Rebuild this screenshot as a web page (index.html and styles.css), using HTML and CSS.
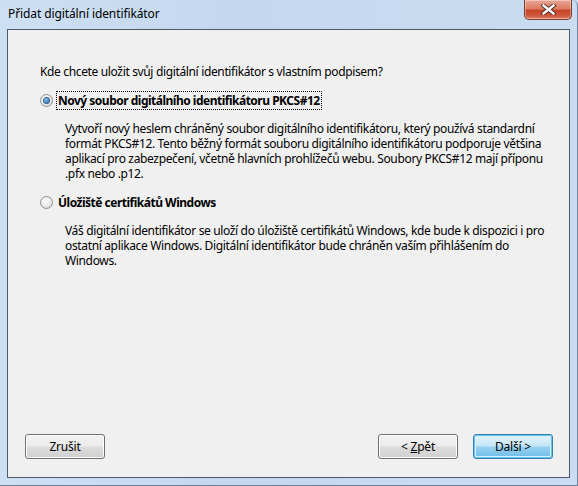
FILE: index.html
```html
<!DOCTYPE html>
<html lang="cs">
<head>
<meta charset="utf-8">
<title>Přidat digitální identifikátor</title>
<link rel="stylesheet" href="styles.css">
</head>
<body>
<div class="window">
  <div class="titlebar">
    <span class="title">Přidat digitální identifikátor</span>
    <button class="close" aria-label="Zavřít">
      <svg width="15" height="11" viewBox="0 0 15 11">
        <path d="M2.5 1.5 L12.5 9.5 M12.5 1.5 L2.5 9.5" stroke="#4a2a25" stroke-width="4.2" stroke-linecap="square" fill="none"/>
        <path d="M2.5 1.5 L12.5 9.5 M12.5 1.5 L2.5 9.5" stroke="#ffffff" stroke-width="2.4" stroke-linecap="square" fill="none"/>
      </svg>
    </button>
  </div>
  <div class="client">
    <p class="question">Kde chcete uložit svůj digitální identifikátor s vlastním podpisem?</p>
    <div class="option option-first">
      <span class="radio checked"></span>
      <span class="label focus">Nový soubor digitálního identifikátoru PKCS#12</span>
    </div>
    <p class="desc">Vytvoří nový heslem chráněný soubor digitálního identifikátoru, který používá standardní formát PKCS#12. Tento běžný formát souboru digitálního identifikátoru podporuje většina aplikací pro zabezpečení, včetně hlavních prohlížečů webu. Soubory PKCS#12 mají příponu .pfx nebo .p12.</p>
    <div class="option option-second">
      <span class="radio"></span>
      <span class="label">Úložiště certifikátů Windows</span>
    </div>
    <p class="desc desc-second">Váš digitální identifikátor se uloží do úložiště certifikátů Windows, kde bude k dispozici i pro ostatní aplikace Windows. Digitální identifikátor bude chráněn vaším přihlášením do Windows.</p>
    <div class="buttons">
      <button class="btn">Zrušit</button>
      <div class="nav">
        <button class="btn">&lt; <u>Z</u>pět</button>
        <button class="btn default">Další &gt;</button>
      </div>
    </div>
  </div>
</div>
</body>
</html>
```
FILE: styles.css
```css
html, body {
  margin: 0;
  padding: 0;
  background: #c9dcf1;
}
body {
  font-family: "Noto Sans", "Open Sans", sans-serif;
  font-size: 12px;
  color: #000;
}
.window {
  width: 578px;
  height: 486px;
  box-sizing: border-box;
  display: flex;
  flex-direction: column;
  background: linear-gradient(90deg, #cddff3 0%, #c3d8ef 40%, #c9dcf1 100%);
  border-right: 1px solid #6e829a;
  border-bottom: 1px solid #6e829a;
  border-radius: 6px 6px 0 0;
  padding: 0 7px 7px 7px;
}
.titlebar {
  height: 29px;
  position: relative;
  display: flex;
  align-items: center;
  flex-shrink: 0;
}
.title {
  font-size: 12px;
  color: #000;
  margin-left: 1px;
  margin-top: -2px;
  letter-spacing: -0.1px;
}
.close {
  position: absolute;
  top: 0;
  right: -2px;
  width: 48px;
  height: 20px;
  border: 1px solid #7d3c30;
  border-top: none;
  border-radius: 0 0 5px 5px;
  background: linear-gradient(#e9a896 0%, #dc7b62 45%, #c7462a 55%, #d0593c 85%, #e08a6c 100%);
  box-shadow: inset 0 0 0 1px rgba(255,255,255,0.35);
  padding: 0;
  display: flex;
  align-items: center;
  justify-content: center;
}
.client {
  flex: 1;
  background: #f0f0f0;
  border: 1px solid #4e5a6c;
  display: flex;
  flex-direction: column;
  padding: 0 16px 18px 17px;
  line-height: 15px;
}
.question {
  margin: 34px 0 0 15px;
  letter-spacing: -0.35px;
}
.option {
  display: flex;
  align-items: center;
  height: 18px;
  margin-left: 15px;
}
.option-first { margin-top: 12px; }
.option-second { margin-top: 12px; }
.radio {
  width: 11px;
  height: 11px;
  border-radius: 50%;
  border: 1px solid #8e8f8f;
  background: radial-gradient(circle at 40% 35%, #ffffff 0%, #e6e6e6 60%, #cfcfcf 100%);
  box-sizing: content-box;
  display: flex;
  align-items: center;
  justify-content: center;
  flex-shrink: 0;
}
.radio.checked::after {
  content: "";
  width: 5px;
  height: 5px;
  border-radius: 50%;
  background: radial-gradient(circle at 40% 35%, #9ad0f5 0%, #2a7bc4 60%, #154e8c 100%);
  box-shadow: 0 0 0 1px #3d5f86;
}
.label {
  font-weight: bold;
  margin-left: 3px;
  padding: 1px 1px 1px 1px;
  border: 1px dotted transparent;
  letter-spacing: -0.5px;
}
.label.focus {
  border-color: #000;
}
.desc {
  margin: 12px 0 0 40px;
  letter-spacing: -0.35px;
}
.desc-second {
  margin-top: 12px;
}
.buttons {
  margin-top: auto;
  display: flex;
  justify-content: space-between;
  align-items: center;
}
.nav {
  display: flex;
  gap: 15px;
}
.btn {
  width: 80px;
  height: 25px;
  font-family: inherit;
  font-size: 12px;
  color: #000;
  border: 1px solid #707070;
  border-radius: 3px;
  background: linear-gradient(#f2f2f2 0%, #ebebeb 48%, #dddddd 52%, #cfcfcf 100%);
  box-shadow: inset 0 0 0 1px #fcfcfc;
  padding: 0;
  letter-spacing: -0.2px;
}
.btn.default {
  border-color: #3c7fb1;
  background: linear-gradient(#e5f4fc 0%, #c4e5f6 48%, #98d1ef 52%, #6dbde8 100%);
  box-shadow: inset 0 0 0 1px #5fc6f2, inset 0 0 0 2px #d6f0fc;
}
```
